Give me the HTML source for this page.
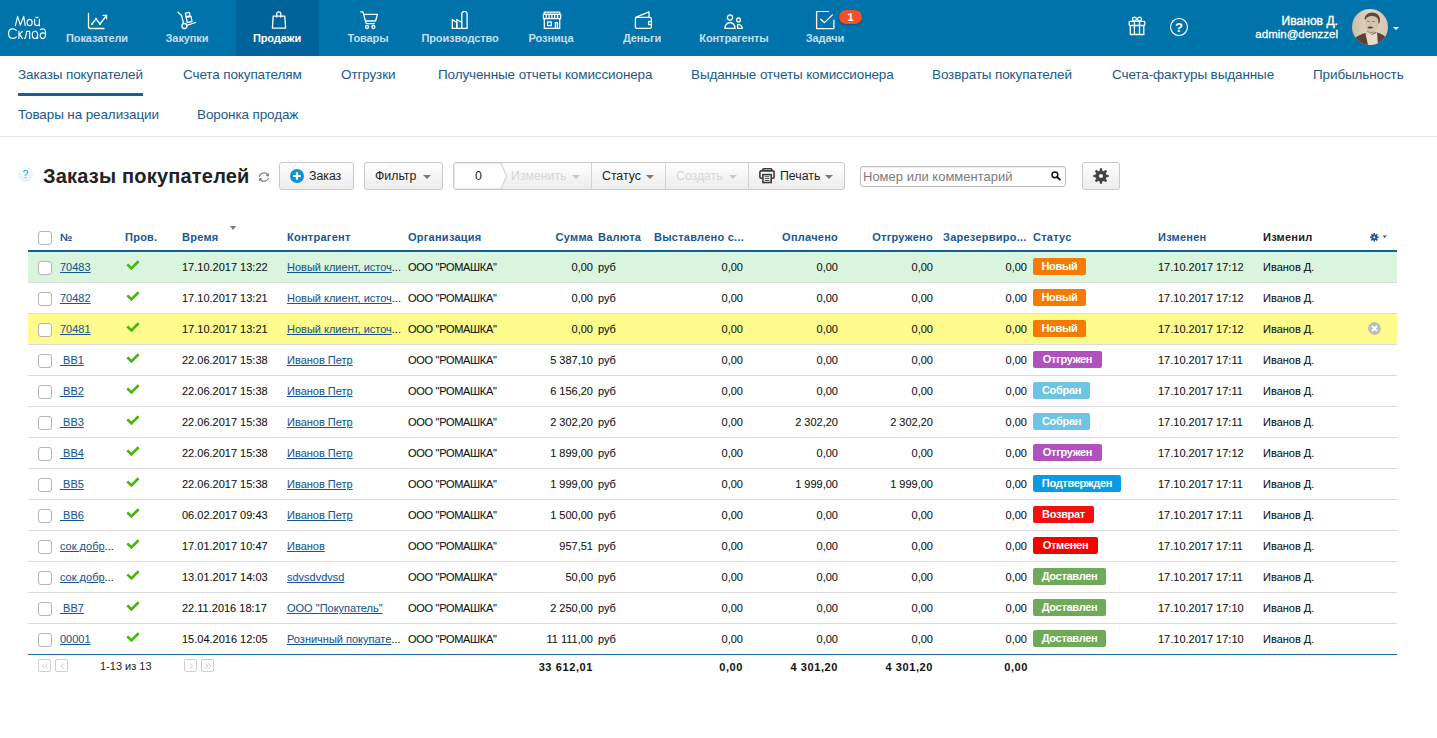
<!DOCTYPE html><html><head><meta charset="utf-8"><title>Заказы покупателей</title><style>
*{margin:0;padding:0;box-sizing:border-box}
html,body{width:1437px;height:738px;overflow:hidden;background:#fff;font-family:"Liberation Sans",sans-serif;position:relative}
.a{position:absolute;white-space:nowrap}
#top{position:absolute;left:0;top:0;width:1437px;height:56px;background:#0073ab}
.act{position:absolute;left:236px;top:0;width:83px;height:56px;background:#00649a}
.nl{position:absolute;top:32px;font:bold 11px/12px "Liberation Sans",sans-serif;color:#c8dfee;transform:translateX(-50%);letter-spacing:-0.1px}
.ni{position:absolute;top:10px}
.sub{position:absolute;font:13.5px/15px "Liberation Sans",sans-serif;color:#1a5a8c;letter-spacing:-0.12px}
.btn{position:absolute;top:162px;height:28px;border:1px solid #c9c9c9;border-radius:3px;background:linear-gradient(#fff,#ececec)}
.bt{position:absolute;font:12.3px/14px "Liberation Sans",sans-serif;color:#222}
.caret{position:absolute;width:0;height:0;border-left:4px solid transparent;border-right:4px solid transparent;border-top:4.5px solid #7a7a7a}
.th{position:absolute;top:231px;font:bold 11px/13px "Liberation Sans",sans-serif;color:#165895;letter-spacing:0.25px}
.row{position:absolute;left:28px;width:1369px;height:31px;border-bottom:1px solid #dcdcdc}
.cb{position:absolute;left:10px;top:9px;width:14px;height:14px;border:1px solid #b5b5b5;border-radius:3px;background:#fff}
.td{position:absolute;top:9px;font:11px/13px "Liberation Sans",sans-serif;color:#111;-webkit-text-stroke:0.08px currentColor}
.lnk{color:#1a5790;text-decoration:underline}
.r{text-align:right}
.badge{position:absolute;top:6px;height:17px;border-radius:2px;color:#fff;font:bold 11px/17px "Liberation Sans",sans-serif;text-align:center;letter-spacing:-0.3px}
.pg{position:absolute;top:659px;width:13px;height:13px;border:1px solid #cfcfcf;border-radius:2px;color:#bbb;font:9px/11px "Liberation Sans",sans-serif;text-align:center}
</style></head><body>
<div id="top"><div class="act"></div>
<svg class="a" style="left:0;top:0" width="56" height="56" viewBox="0 0 56 56"><g fill="none" stroke="#fff" stroke-width="1.15" stroke-linecap="round" stroke-linejoin="round"><path d="M15.4 25.6L17.6 16.4L20.3 25.2L23.7 16.4L25.2 25.6"/><ellipse cx="29.6" cy="22.5" rx="2.55" ry="3.2"/><path d="M34.6 19.3V23.2Q34.6 25.6 37 25.6Q39.4 25.6 39.4 23.2V19.3M39.4 23V25.7"/><path d="M36 17.2Q37 18 38 17.2"/><path d="M16.3 30.3Q14.8 28.8 12.6 28.8Q8.6 28.8 8.6 33.6Q8.6 38.4 12.6 38.4Q14.8 38.4 16.3 37"/><path d="M18.9 31.4V38.5M18.9 35L22.3 31.4M19.6 34.4L22.5 38.5"/><path d="M24.4 38.5Q26.3 37.5 26.5 31.4H29.7V38.5"/><path d="M37.6 34.8Q37.6 31.2 35 31.2Q32.3 31.2 32.3 34.8Q32.3 38.5 35 38.5Q37.6 38.5 37.6 34.8V38.5"/><path d="M40.4 29.6Q42 28.6 43.7 29Q45.7 29.6 45.6 34Q45.5 38.6 42.9 38.6Q40.2 38.6 40.2 35.6Q40.2 32.8 42.9 32.8Q45 32.8 45.5 34.2"/></g></svg>
<div class="ni" style="left:86px;top:11.5px"><svg width="24" height="22" viewBox="0 0 24 22"><g fill="none" stroke="#fff" stroke-width="1.3" stroke-linecap="round" stroke-linejoin="round"><path d="M2.5 1.5V14.5q0 2 2 2H18"/><path d="M6 12L10 6.8L14 12L20.5 3.5"/><path d="M17.2 3.4H20.6V6.8"/></g><g fill="#fff"><circle cx="6" cy="12" r="1"/><circle cx="10" cy="6.8" r="1"/><circle cx="14" cy="12" r="1"/></g></svg></div>
<div class="nl" style="left:97px;color:#c8dfee">Показатели</div>
<div class="ni" style="left:175px;top:11px"><svg width="24" height="22" viewBox="0 0 24 22"><g fill="none" stroke="#fff" stroke-width="1.3" stroke-linecap="round" stroke-linejoin="round"><path d="M3 1.3L6.6 4.6L8.4 12"/><circle cx="9.4" cy="15" r="2.5"/><path d="M11.9 14.3L20.5 11.5"/><path d="M10.4 2.2L14.4 1.4L15 4.8L11 5.6Z"/><path d="M11.2 6.3L16 5.4L17 10.6L12.2 11.5Z"/></g></svg></div>
<div class="nl" style="left:187px;color:#c8dfee">Закупки</div>
<div class="ni" style="left:266.5px;top:10.5px"><svg width="24" height="22" viewBox="0 0 24 22"><g fill="none" stroke="#fff" stroke-width="1.3" stroke-linecap="round" stroke-linejoin="round"><path d="M6.2 5.2H17.8L18.6 17.2H5.4Z"/><path d="M9.8 6V2.8a2 2 0 0 1 4 0V6"/></g></svg></div>
<div class="nl" style="left:277px;color:#ffffff">Продажи</div>
<div class="ni" style="left:358px;top:10.8px"><svg width="24" height="22" viewBox="0 0 24 22"><g fill="none" stroke="#fff" stroke-width="1.3" stroke-linecap="round" stroke-linejoin="round"><path d="M2.8 0.9H5L7.8 11.5q0.4 1.2 1.6 1.2H16.3"/><path d="M5.6 3.3H19.4L17.6 10H7.4"/><circle cx="9" cy="16" r="1.5"/><circle cx="15.4" cy="16" r="1.5"/></g></svg></div>
<div class="nl" style="left:368px;color:#c8dfee">Товары</div>
<div class="ni" style="left:448px;top:11px"><svg width="24" height="22" viewBox="0 0 24 22"><g fill="none" stroke="#fff" stroke-width="1.3" stroke-linecap="round" stroke-linejoin="round"><path d="M4.3 17.4V8.6L8.8 11.5V17.4"/><path d="M8.8 8.6L13.8 11.5"/><path d="M13.8 17.4V3.1a2.6 2.6 0 0 1 5.3 0V17.4H4.3"/><path d="M8.8 17.4V8.6"/></g></svg></div>
<div class="nl" style="left:460px;color:#c8dfee">Производство</div>
<div class="ni" style="left:540px;top:10.5px"><svg width="24" height="22" viewBox="0 0 24 22"><g fill="none" stroke="#fff" stroke-width="1.3" stroke-linecap="round" stroke-linejoin="round"><path d="M4.3 1.2H19.7V3.3H4.3Z"/><path d="M3.4 3.3H20.6V7.6H3.4Z"/><path d="M6.3 3.5V7.4 M9.1 3.5V7.4 M11.9 3.5V7.4 M14.7 3.5V7.4 M17.6 3.5V7.4"/><path d="M4.3 7.7V17.45H19.7V7.7"/><path d="M7.6 10.9H11.3V14.7H7.6Z"/><path d="M15.4 17.4V11.6H17.4V17.4"/></g></svg></div>
<div class="nl" style="left:551px;color:#c8dfee">Розница</div>
<div class="ni" style="left:631px;top:11px"><svg width="24" height="22" viewBox="0 0 24 22"><g fill="none" stroke="#fff" stroke-width="1.3" stroke-linecap="round" stroke-linejoin="round"><rect x="4.4" y="6.4" width="16" height="11" rx="1.6"/><path d="M4.6 6.3L18 0.8V6.3"/><path d="M20.3 10.4H17.6V13.6H20.3"/></g></svg></div>
<div class="nl" style="left:642px;color:#c8dfee">Деньги</div>
<div class="ni" style="left:721px;top:11.5px"><svg width="24" height="22" viewBox="0 0 24 22"><g fill="none" stroke="#fff" stroke-width="1.3" stroke-linecap="round" stroke-linejoin="round"><circle cx="9" cy="5.6" r="2.6"/><path d="M3.9 16.4a5.1 5.9 0 0 1 10.2 0Z"/><circle cx="17.5" cy="7.9" r="1.9"/><path d="M16.6 12.4a4.6 4 0 0 1 4.6 4H16.6Z"/></g></svg></div>
<div class="nl" style="left:734px;color:#c8dfee">Контрагенты</div>
<div class="ni" style="left:812px;top:11px"><svg width="24" height="22" viewBox="0 0 24 22"><g fill="none" stroke="#fff" stroke-width="1.3" stroke-linecap="round" stroke-linejoin="round"><path d="M16.3 0.4H4.6V17.6H21.9V9.2"/><path d="M8.6 8.3L12.4 11.6L20.4 3.9"/></g></svg></div>
<div class="nl" style="left:825px;color:#c8dfee">Задачи</div>
<div class="a" style="left:839px;top:10px;width:23px;height:14px;border-radius:7px;background:#f4512b;color:#fff;font:bold 11px/14px 'Liberation Sans',sans-serif;text-align:center;box-shadow:0 1px 2px rgba(0,0,0,.25)">1</div>
<svg class="a" style="left:1126px;top:15px" width="22" height="22" viewBox="0 0 22 22"><g fill="none" stroke="#fff" stroke-width="1.3"><rect x="3.2" y="6.4" width="15.6" height="4.1" rx="0.8"/><path d="M4.3 10.5V19.5H17.8V10.5"/><path d="M8.4 6.4V19.5M13.5 6.4V19.5"/><circle cx="8.4" cy="4.1" r="1.9"/><circle cx="13.5" cy="4.1" r="1.9"/></g></svg>
<svg class="a" style="left:1168px;top:16px" width="22" height="22" viewBox="0 0 22 22"><circle cx="11" cy="11" r="8.5" fill="none" stroke="#fff" stroke-width="1.2"/><text x="11" y="15.6" text-anchor="middle" font-family="Liberation Sans" font-weight="bold" font-size="13" fill="#fff">?</text></svg>
<div class="a" style="right:99px;top:15px;font:12px/13px 'Liberation Sans',sans-serif;color:#fff;text-align:right;-webkit-text-stroke:0.4px #fff;letter-spacing:0.05px">Иванов Д.</div>
<div class="a" style="right:99px;top:28px;font:11.5px/13px 'Liberation Sans',sans-serif;color:#fff;text-align:right;-webkit-text-stroke:0.3px #fff">admin@denzzel</div>
<svg class="a" style="left:1352px;top:9px" width="36" height="36" viewBox="0 0 36 36"><defs><clipPath id="cp"><circle cx="18" cy="18" r="18"/></clipPath><linearGradient id="bgav" x1="0" y1="0" x2="1" y2="0"><stop offset="0" stop-color="#cdbca6"/><stop offset="0.5" stop-color="#e2d6c4"/><stop offset="1" stop-color="#d6c6b0"/></linearGradient></defs><g clip-path="url(#cp)"><rect width="36" height="36" fill="url(#bgav)"/><path d="M0 36V31Q6 26 13 24L17 27L24 23Q31 25 36 30V36Z" fill="#5e4036"/><path d="M13.5 24.5L16 36H26L25 23Q22 26 19 26Q16 26 13.5 24.5Z" fill="#e6dccd"/><path d="M13 11Q13 20 15.5 23Q18 25.5 21 24.5Q26 22 27 13Q27 6 20.5 5.5Q13 5.5 13 11Z" fill="#d3c2ac"/><path d="M12.5 10Q13 4 20 3.5Q27 3.5 28 10Q28 14 26.5 15L26 10Q24 6.5 19 7Q14 7.5 13.5 11Z" fill="#5f463c"/><path d="M15.5 18.2Q18 16.6 21.5 18.6Q19.5 19.8 18.5 19.2Q17 20 15.5 18.2Z" fill="#4e3a32"/><path d="M15 12.5H18M20 12.5H23" stroke="#8a7262" stroke-width="0.8"/><path d="M15 22Q18 25 22 23" stroke="#9b8573" stroke-width="1" fill="none"/></g></svg>
<div class="a" style="left:1393px;top:27px;width:0;height:0;border-left:3px solid transparent;border-right:3px solid transparent;border-top:3px solid #fff"></div>
</div>
<div class="sub" style="left:18px;top:67px">Заказы покупателей</div>
<div class="sub" style="left:183px;top:67px">Счета покупателям</div>
<div class="sub" style="left:341px;top:67px">Отгрузки</div>
<div class="sub" style="left:438px;top:67px">Полученные отчеты комиссионера</div>
<div class="sub" style="left:691px;top:67px">Выданные отчеты комиссионера</div>
<div class="sub" style="left:932px;top:67px">Возвраты покупателей</div>
<div class="sub" style="left:1112px;top:67px">Счета-фактуры выданные</div>
<div class="sub" style="left:1313px;top:67px">Прибыльность</div>
<div class="sub" style="left:18px;top:107px">Товары на реализации</div>
<div class="sub" style="left:197px;top:107px">Воронка продаж</div>
<div class="a" style="left:18px;top:93px;width:125px;height:3px;background:#1560a0"></div>
<div class="a" style="left:0;top:136px;width:1437px;height:1px;background:#e8e8e8"></div>
<div class="a" style="left:18px;top:166.5px;width:15px;height:15px;border-radius:50%;background:radial-gradient(circle at 50% 30%,#fbfdff,#deeef8);color:#2a9cd0;font:10.5px/14px 'Liberation Sans',sans-serif;text-align:center">?</div>
<div class="a" style="left:43px;top:164.5px;font:bold 20px/23px 'Liberation Sans',sans-serif;color:#222;letter-spacing:0.2px">Заказы покупателей</div>
<svg class="a" style="left:258px;top:171px" width="12" height="12" viewBox="0 0 12 12"><g fill="none" stroke="#777" stroke-width="1.1"><path d="M1.4 6A4.7 4.5 0 0 1 9.8 3.6"/><path d="M10.6 6.8A4.7 4.5 0 0 1 2.4 8.6"/></g><path d="M10.9 1.8V5.3H7.5Z" fill="#777"/><path d="M1.1 10.6V7.2H4.5Z" fill="#777"/></svg>
<div class="btn" style="left:279px;width:75px"></div>
<svg class="a" style="left:290px;top:169px" width="14" height="14" viewBox="0 0 14 14"><circle cx="7" cy="7" r="7" fill="#0c92da"/><path d="M7 3.3V10.7M3.3 7H10.7" stroke="#fff" stroke-width="2.2"/></svg>
<div class="bt" style="left:309px;top:169px">Заказ</div>
<div class="btn" style="left:364px;width:79px"></div>
<div class="bt" style="left:375px;top:169px">Фильтр</div>
<div class="caret" style="left:423px;top:175px"></div>
<div class="btn" style="left:453px;width:392px"></div>
<svg class="a" style="left:454px;top:163px" width="54" height="26" viewBox="0 0 54 26"><path d="M0 0H47L52.5 13L47 26H0Z" fill="#fff" stroke="#cfcfcf" stroke-width="1"/></svg>
<div class="bt" style="left:475px;top:169px">0</div>
<div class="bt" style="left:511px;top:169px;color:#d6d6d6">Изменить</div>
<div class="caret" style="left:572px;top:175px;border-top-color:#c8c8c8"></div>
<div class="a" style="left:591px;top:163px;width:1px;height:26px;background:#d3d3d3"></div>
<div class="bt" style="left:602px;top:169px">Статус</div>
<div class="caret" style="left:646px;top:175px"></div>
<div class="a" style="left:665px;top:163px;width:1px;height:26px;background:#d3d3d3"></div>
<div class="bt" style="left:676px;top:169px;color:#d6d6d6">Создать</div>
<div class="caret" style="left:729px;top:175px;border-top-color:#c8c8c8"></div>
<div class="a" style="left:748px;top:163px;width:1px;height:26px;background:#d3d3d3"></div>
<svg class="a" style="left:759px;top:168px" width="17" height="16" viewBox="0 0 17 16"><g fill="none" stroke="#3a3a3a" stroke-width="1.6"><path d="M3.8 2.6V1.6Q3.8 0.8 4.6 0.8H12Q12.8 0.8 12.8 1.6V2.6"/><path d="M3.3 10.2H2Q0.9 10.2 0.9 9.1V4.2Q0.9 2.9 2.2 2.9H13.8Q15.1 2.9 15.1 4.2V9.1Q15.1 10.2 14 10.2H12.8"/><rect x="3.9" y="6.6" width="8.3" height="7.9" fill="#fff"/><path d="M5.7 8.7H10.4M5.7 10.6H10.4M5.7 12.5H10.4" stroke-width="0.9"/></g></svg>
<div class="bt" style="left:780px;top:169px">Печать</div>
<div class="caret" style="left:825px;top:175px"></div>
<div class="a" style="left:860px;top:166px;width:206px;height:21px;border:1px solid #bdbdbd;border-radius:3px;background:#fff;box-shadow:inset 0 1px 1px rgba(0,0,0,.06)"></div>
<div class="a" style="left:863px;top:169px;font:13px/15px 'Liberation Sans',sans-serif;color:#7b7b7b">Номер или комментарий</div>
<svg class="a" style="left:1051px;top:171px" width="11" height="10" viewBox="0 0 11 10"><circle cx="3.9" cy="3.8" r="2.9" fill="none" stroke="#111" stroke-width="1.5"/><path d="M6.1 6L8.9 8.6" stroke="#111" stroke-width="1.9" stroke-linecap="round"/></svg>
<div class="btn" style="left:1082px;width:38px"></div>
<svg class="a" style="left:1093px;top:168px" width="16" height="16" viewBox="0 0 16 16"><g fill="#454545"><circle cx="8" cy="8" r="5.5"/><path d="M7 0.3H9L9.6 4H6.4Z"/><path d="M7 0.3H9L9.6 4H6.4Z" transform="rotate(45 8 8)"/><path d="M7 0.3H9L9.6 4H6.4Z" transform="rotate(90 8 8)"/><path d="M7 0.3H9L9.6 4H6.4Z" transform="rotate(135 8 8)"/><path d="M7 0.3H9L9.6 4H6.4Z" transform="rotate(180 8 8)"/><path d="M7 0.3H9L9.6 4H6.4Z" transform="rotate(225 8 8)"/><path d="M7 0.3H9L9.6 4H6.4Z" transform="rotate(270 8 8)"/><path d="M7 0.3H9L9.6 4H6.4Z" transform="rotate(315 8 8)"/></g><circle cx="8" cy="8" r="2.1" fill="#f0f0f0"/></svg>
<div class="cb" style="left:38px;top:231px"></div>
<div class="th" style="left:60px;color:#165895">№</div>
<div class="th" style="left:125px;color:#165895">Пров.</div>
<div class="th" style="left:182px;color:#165895">Время</div>
<div class="th" style="left:287px;color:#165895">Контрагент</div>
<div class="th" style="left:408px;color:#165895">Организация</div>
<div class="th" style="right:844px;color:#165895">Сумма</div>
<div class="th" style="left:598px;color:#165895">Валюта</div>
<div class="th" style="left:654px;color:#165895">Выставлено с...</div>
<div class="th" style="right:599px;color:#165895">Оплачено</div>
<div class="th" style="right:504px;color:#165895">Отгружено</div>
<div class="th" style="left:943px;color:#165895">Зарезервиро...</div>
<div class="th" style="left:1033px;color:#165895">Статус</div>
<div class="th" style="left:1158px;color:#165895">Изменен</div>
<div class="th" style="left:1263px;color:#222">Изменил</div>
<div class="a" style="left:230px;top:226px;width:0;height:0;border-left:3px solid transparent;border-right:3px solid transparent;border-top:4px solid #777"></div>
<svg class="a" style="left:1370px;top:233px" width="18" height="9" viewBox="0 0 18 9"><g fill="#1a5b92"><circle cx="4.3" cy="4.3" r="2.8"/><rect x="3.5" y="0" width="1.6" height="8.6"/><rect x="0" y="3.5" width="8.6" height="1.6"/><rect x="3.5" y="0" width="1.6" height="8.6" transform="rotate(45 4.3 4.3)"/><rect x="3.5" y="0" width="1.6" height="8.6" transform="rotate(-45 4.3 4.3)"/><path d="M12.5 2.5H17L14.75 5Z"/></g><circle cx="4.3" cy="4.3" r="1.1" fill="#fff"/></svg>
<div class="a" style="left:28px;top:250px;width:1369px;height:2px;background:#125e9c"></div>
<div class="row" style="top:252px;background:#d9f5de">
<div class="cb"></div>
<div class="td lnk" style="left:32px">70483</div>
<svg class="a" style="left:98px;top:8px" width="14" height="11" viewBox="0 0 14 11"><path d="M1.3 4.4L5.4 8.4L12.6 1.3" fill="none" stroke="#4ab60f" stroke-width="2.7"/></svg>
<div class="td" style="left:154px">17.10.2017 13:22</div>
<div class="td" style="left:259px"><span class="lnk">Новый клиент, источ</span>...</div>
<div class="td" style="left:380px;letter-spacing:-0.3px">ООО "РОМАШКА"</div>
<div class="td r" style="right:804px">0,00</div>
<div class="td" style="left:570px">руб</div>
<div class="td r" style="right:654px">0,00</div>
<div class="td r" style="right:559px">0,00</div>
<div class="td r" style="right:464px">0,00</div>
<div class="td r" style="right:370px">0,00</div>
<div class="badge" style="left:1005px;width:53px;background:#f57b00">Новый</div>
<div class="td" style="left:1130px">17.10.2017 17:12</div>
<div class="td" style="left:1235px">Иванов Д.</div>
</div>
<div class="row" style="top:283px;background:#ffffff">
<div class="cb"></div>
<div class="td lnk" style="left:32px">70482</div>
<svg class="a" style="left:98px;top:8px" width="14" height="11" viewBox="0 0 14 11"><path d="M1.3 4.4L5.4 8.4L12.6 1.3" fill="none" stroke="#4ab60f" stroke-width="2.7"/></svg>
<div class="td" style="left:154px">17.10.2017 13:21</div>
<div class="td" style="left:259px"><span class="lnk">Новый клиент, источ</span>...</div>
<div class="td" style="left:380px;letter-spacing:-0.3px">ООО "РОМАШКА"</div>
<div class="td r" style="right:804px">0,00</div>
<div class="td" style="left:570px">руб</div>
<div class="td r" style="right:654px">0,00</div>
<div class="td r" style="right:559px">0,00</div>
<div class="td r" style="right:464px">0,00</div>
<div class="td r" style="right:370px">0,00</div>
<div class="badge" style="left:1005px;width:53px;background:#f57b00">Новый</div>
<div class="td" style="left:1130px">17.10.2017 17:12</div>
<div class="td" style="left:1235px">Иванов Д.</div>
</div>
<div class="row" style="top:314px;background:#fdfc8c">
<div class="cb"></div>
<div class="td lnk" style="left:32px">70481</div>
<svg class="a" style="left:98px;top:8px" width="14" height="11" viewBox="0 0 14 11"><path d="M1.3 4.4L5.4 8.4L12.6 1.3" fill="none" stroke="#4ab60f" stroke-width="2.7"/></svg>
<div class="td" style="left:154px">17.10.2017 13:21</div>
<div class="td" style="left:259px"><span class="lnk">Новый клиент, источ</span>...</div>
<div class="td" style="left:380px;letter-spacing:-0.3px">ООО "РОМАШКА"</div>
<div class="td r" style="right:804px">0,00</div>
<div class="td" style="left:570px">руб</div>
<div class="td r" style="right:654px">0,00</div>
<div class="td r" style="right:559px">0,00</div>
<div class="td r" style="right:464px">0,00</div>
<div class="td r" style="right:370px">0,00</div>
<div class="badge" style="left:1005px;width:53px;background:#f57b00">Новый</div>
<div class="td" style="left:1130px">17.10.2017 17:12</div>
<div class="td" style="left:1235px">Иванов Д.</div>
<svg class="a" style="left:1340px;top:8px" width="14" height="14" viewBox="0 0 14 14"><circle cx="6.5" cy="6.5" r="6.4" fill="#bdbdbd"/><path d="M4 4L9 9M9 4L4 9" stroke="#fff" stroke-width="1.8"/></svg>
</div>
<div class="row" style="top:345px;background:#ffffff">
<div class="cb"></div>
<div class="td lnk" style="left:32px">&nbsp;BB1</div>
<svg class="a" style="left:98px;top:8px" width="14" height="11" viewBox="0 0 14 11"><path d="M1.3 4.4L5.4 8.4L12.6 1.3" fill="none" stroke="#4ab60f" stroke-width="2.7"/></svg>
<div class="td" style="left:154px">22.06.2017 15:38</div>
<div class="td" style="left:259px"><span class="lnk">Иванов Петр</span></div>
<div class="td" style="left:380px;letter-spacing:-0.3px">ООО "РОМАШКА"</div>
<div class="td r" style="right:804px">5 387,10</div>
<div class="td" style="left:570px">руб</div>
<div class="td r" style="right:654px">0,00</div>
<div class="td r" style="right:559px">0,00</div>
<div class="td r" style="right:464px">0,00</div>
<div class="td r" style="right:370px">0,00</div>
<div class="badge" style="left:1005px;width:69px;background:#b151be">Отгружен</div>
<div class="td" style="left:1130px">17.10.2017 17:11</div>
<div class="td" style="left:1235px">Иванов Д.</div>
</div>
<div class="row" style="top:376px;background:#ffffff">
<div class="cb"></div>
<div class="td lnk" style="left:32px">&nbsp;BB2</div>
<svg class="a" style="left:98px;top:8px" width="14" height="11" viewBox="0 0 14 11"><path d="M1.3 4.4L5.4 8.4L12.6 1.3" fill="none" stroke="#4ab60f" stroke-width="2.7"/></svg>
<div class="td" style="left:154px">22.06.2017 15:38</div>
<div class="td" style="left:259px"><span class="lnk">Иванов Петр</span></div>
<div class="td" style="left:380px;letter-spacing:-0.3px">ООО "РОМАШКА"</div>
<div class="td r" style="right:804px">6 156,20</div>
<div class="td" style="left:570px">руб</div>
<div class="td r" style="right:654px">0,00</div>
<div class="td r" style="right:559px">0,00</div>
<div class="td r" style="right:464px">0,00</div>
<div class="td r" style="right:370px">0,00</div>
<div class="badge" style="left:1005px;width:57px;background:#6ec4e2">Собран</div>
<div class="td" style="left:1130px">17.10.2017 17:11</div>
<div class="td" style="left:1235px">Иванов Д.</div>
</div>
<div class="row" style="top:407px;background:#ffffff">
<div class="cb"></div>
<div class="td lnk" style="left:32px">&nbsp;BB3</div>
<svg class="a" style="left:98px;top:8px" width="14" height="11" viewBox="0 0 14 11"><path d="M1.3 4.4L5.4 8.4L12.6 1.3" fill="none" stroke="#4ab60f" stroke-width="2.7"/></svg>
<div class="td" style="left:154px">22.06.2017 15:38</div>
<div class="td" style="left:259px"><span class="lnk">Иванов Петр</span></div>
<div class="td" style="left:380px;letter-spacing:-0.3px">ООО "РОМАШКА"</div>
<div class="td r" style="right:804px">2 302,20</div>
<div class="td" style="left:570px">руб</div>
<div class="td r" style="right:654px">0,00</div>
<div class="td r" style="right:559px">2 302,20</div>
<div class="td r" style="right:464px">2 302,20</div>
<div class="td r" style="right:370px">0,00</div>
<div class="badge" style="left:1005px;width:57px;background:#6ec4e2">Собран</div>
<div class="td" style="left:1130px">17.10.2017 17:11</div>
<div class="td" style="left:1235px">Иванов Д.</div>
</div>
<div class="row" style="top:438px;background:#ffffff">
<div class="cb"></div>
<div class="td lnk" style="left:32px">&nbsp;BB4</div>
<svg class="a" style="left:98px;top:8px" width="14" height="11" viewBox="0 0 14 11"><path d="M1.3 4.4L5.4 8.4L12.6 1.3" fill="none" stroke="#4ab60f" stroke-width="2.7"/></svg>
<div class="td" style="left:154px">22.06.2017 15:38</div>
<div class="td" style="left:259px"><span class="lnk">Иванов Петр</span></div>
<div class="td" style="left:380px;letter-spacing:-0.3px">ООО "РОМАШКА"</div>
<div class="td r" style="right:804px">1 899,00</div>
<div class="td" style="left:570px">руб</div>
<div class="td r" style="right:654px">0,00</div>
<div class="td r" style="right:559px">0,00</div>
<div class="td r" style="right:464px">0,00</div>
<div class="td r" style="right:370px">0,00</div>
<div class="badge" style="left:1005px;width:69px;background:#b151be">Отгружен</div>
<div class="td" style="left:1130px">17.10.2017 17:12</div>
<div class="td" style="left:1235px">Иванов Д.</div>
</div>
<div class="row" style="top:469px;background:#ffffff">
<div class="cb"></div>
<div class="td lnk" style="left:32px">&nbsp;BB5</div>
<svg class="a" style="left:98px;top:8px" width="14" height="11" viewBox="0 0 14 11"><path d="M1.3 4.4L5.4 8.4L12.6 1.3" fill="none" stroke="#4ab60f" stroke-width="2.7"/></svg>
<div class="td" style="left:154px">22.06.2017 15:38</div>
<div class="td" style="left:259px"><span class="lnk">Иванов Петр</span></div>
<div class="td" style="left:380px;letter-spacing:-0.3px">ООО "РОМАШКА"</div>
<div class="td r" style="right:804px">1 999,00</div>
<div class="td" style="left:570px">руб</div>
<div class="td r" style="right:654px">0,00</div>
<div class="td r" style="right:559px">1 999,00</div>
<div class="td r" style="right:464px">1 999,00</div>
<div class="td r" style="right:370px">0,00</div>
<div class="badge" style="left:1005px;width:88px;background:#0a9be3">Подтвержден</div>
<div class="td" style="left:1130px">17.10.2017 17:11</div>
<div class="td" style="left:1235px">Иванов Д.</div>
</div>
<div class="row" style="top:500px;background:#ffffff">
<div class="cb"></div>
<div class="td lnk" style="left:32px">&nbsp;BB6</div>
<svg class="a" style="left:98px;top:8px" width="14" height="11" viewBox="0 0 14 11"><path d="M1.3 4.4L5.4 8.4L12.6 1.3" fill="none" stroke="#4ab60f" stroke-width="2.7"/></svg>
<div class="td" style="left:154px">06.02.2017 09:43</div>
<div class="td" style="left:259px"><span class="lnk">Иванов Петр</span></div>
<div class="td" style="left:380px;letter-spacing:-0.3px">ООО "РОМАШКА"</div>
<div class="td r" style="right:804px">1 500,00</div>
<div class="td" style="left:570px">руб</div>
<div class="td r" style="right:654px">0,00</div>
<div class="td r" style="right:559px">0,00</div>
<div class="td r" style="right:464px">0,00</div>
<div class="td r" style="right:370px">0,00</div>
<div class="badge" style="left:1005px;width:61px;background:#f01010">Возврат</div>
<div class="td" style="left:1130px">17.10.2017 17:11</div>
<div class="td" style="left:1235px">Иванов Д.</div>
</div>
<div class="row" style="top:531px;background:#ffffff">
<div class="cb"></div>
<div class="td" style="left:32px"><span class="lnk">сок добр</span>...</div>
<svg class="a" style="left:98px;top:8px" width="14" height="11" viewBox="0 0 14 11"><path d="M1.3 4.4L5.4 8.4L12.6 1.3" fill="none" stroke="#4ab60f" stroke-width="2.7"/></svg>
<div class="td" style="left:154px">17.01.2017 10:47</div>
<div class="td" style="left:259px"><span class="lnk">Иванов</span></div>
<div class="td" style="left:380px;letter-spacing:-0.3px">ООО "РОМАШКА"</div>
<div class="td r" style="right:804px">957,51</div>
<div class="td" style="left:570px">руб</div>
<div class="td r" style="right:654px">0,00</div>
<div class="td r" style="right:559px">0,00</div>
<div class="td r" style="right:464px">0,00</div>
<div class="td r" style="right:370px">0,00</div>
<div class="badge" style="left:1005px;width:65px;background:#f80000">Отменен</div>
<div class="td" style="left:1130px">17.10.2017 17:11</div>
<div class="td" style="left:1235px">Иванов Д.</div>
</div>
<div class="row" style="top:562px;background:#ffffff">
<div class="cb"></div>
<div class="td" style="left:32px"><span class="lnk">сок добр</span>...</div>
<svg class="a" style="left:98px;top:8px" width="14" height="11" viewBox="0 0 14 11"><path d="M1.3 4.4L5.4 8.4L12.6 1.3" fill="none" stroke="#4ab60f" stroke-width="2.7"/></svg>
<div class="td" style="left:154px">13.01.2017 14:03</div>
<div class="td" style="left:259px"><span class="lnk">sdvsdvdvsd</span></div>
<div class="td" style="left:380px;letter-spacing:-0.3px">ООО "РОМАШКА"</div>
<div class="td r" style="right:804px">50,00</div>
<div class="td" style="left:570px">руб</div>
<div class="td r" style="right:654px">0,00</div>
<div class="td r" style="right:559px">0,00</div>
<div class="td r" style="right:464px">0,00</div>
<div class="td r" style="right:370px">0,00</div>
<div class="badge" style="left:1005px;width:73px;background:#6faa5a">Доставлен</div>
<div class="td" style="left:1130px">17.10.2017 17:11</div>
<div class="td" style="left:1235px">Иванов Д.</div>
</div>
<div class="row" style="top:593px;background:#ffffff">
<div class="cb"></div>
<div class="td lnk" style="left:32px">&nbsp;BB7</div>
<svg class="a" style="left:98px;top:8px" width="14" height="11" viewBox="0 0 14 11"><path d="M1.3 4.4L5.4 8.4L12.6 1.3" fill="none" stroke="#4ab60f" stroke-width="2.7"/></svg>
<div class="td" style="left:154px">22.11.2016 18:17</div>
<div class="td" style="left:259px"><span class="lnk">ООО "Покупатель"</span></div>
<div class="td" style="left:380px;letter-spacing:-0.3px">ООО "РОМАШКА"</div>
<div class="td r" style="right:804px">2 250,00</div>
<div class="td" style="left:570px">руб</div>
<div class="td r" style="right:654px">0,00</div>
<div class="td r" style="right:559px">0,00</div>
<div class="td r" style="right:464px">0,00</div>
<div class="td r" style="right:370px">0,00</div>
<div class="badge" style="left:1005px;width:73px;background:#6faa5a">Доставлен</div>
<div class="td" style="left:1130px">17.10.2017 17:10</div>
<div class="td" style="left:1235px">Иванов Д.</div>
</div>
<div class="row" style="top:624px;background:#ffffff">
<div class="cb"></div>
<div class="td lnk" style="left:32px">00001</div>
<svg class="a" style="left:98px;top:8px" width="14" height="11" viewBox="0 0 14 11"><path d="M1.3 4.4L5.4 8.4L12.6 1.3" fill="none" stroke="#4ab60f" stroke-width="2.7"/></svg>
<div class="td" style="left:154px">15.04.2016 12:05</div>
<div class="td" style="left:259px"><span class="lnk">Розничный покупате</span>...</div>
<div class="td" style="left:380px;letter-spacing:-0.3px">ООО "РОМАШКА"</div>
<div class="td r" style="right:804px">11 111,00</div>
<div class="td" style="left:570px">руб</div>
<div class="td r" style="right:654px">0,00</div>
<div class="td r" style="right:559px">0,00</div>
<div class="td r" style="right:464px">0,00</div>
<div class="td r" style="right:370px">0,00</div>
<div class="badge" style="left:1005px;width:73px;background:#6faa5a">Доставлен</div>
<div class="td" style="left:1130px">17.10.2017 17:10</div>
<div class="td" style="left:1235px">Иванов Д.</div>
</div>
<div class="a" style="left:28px;top:654px;width:1369px;height:1px;background:#1c6ea6"></div>
<div class="pg" style="left:38px"><svg width="11" height="11" viewBox="0 0 11 11" style="position:absolute;left:0;top:0"><path d="M6 3.5L3.5 6L6 8.5M8.8 3.5L6.3 6L8.8 8.5" fill="none" stroke="#c4c4c4" stroke-width="0.9"/></svg></div>
<div class="pg" style="left:55px"><svg width="11" height="11" viewBox="0 0 11 11" style="position:absolute;left:0;top:0"><path d="M7.5 3.5L5 6L7.5 8.5" fill="none" stroke="#c4c4c4" stroke-width="0.9"/></svg></div>
<div class="pg" style="left:184px"><svg width="11" height="11" viewBox="0 0 11 11" style="position:absolute;left:0;top:0"><path d="M5 3.5L7.5 6L5 8.5" fill="none" stroke="#c4c4c4" stroke-width="0.9"/></svg></div>
<div class="pg" style="left:201px"><svg width="11" height="11" viewBox="0 0 11 11" style="position:absolute;left:0;top:0"><path d="M3.6 3.5L6.1 6L3.6 8.5M6.4 3.5L8.9 6L6.4 8.5" fill="none" stroke="#c4c4c4" stroke-width="0.9"/></svg></div>
<div class="a" style="left:100px;top:660px;font:11px/13px 'Liberation Sans',sans-serif;color:#222">1-13 из 13</div>
<div class="a" style="right:844px;top:661px;font:bold 11px/13px 'Liberation Sans',sans-serif;color:#111;text-align:right;letter-spacing:0.6px">33 612,01</div>
<div class="a" style="right:694px;top:661px;font:bold 11px/13px 'Liberation Sans',sans-serif;color:#111;text-align:right;letter-spacing:0.6px">0,00</div>
<div class="a" style="right:599px;top:661px;font:bold 11px/13px 'Liberation Sans',sans-serif;color:#111;text-align:right;letter-spacing:0.6px">4 301,20</div>
<div class="a" style="right:504px;top:661px;font:bold 11px/13px 'Liberation Sans',sans-serif;color:#111;text-align:right;letter-spacing:0.6px">4 301,20</div>
<div class="a" style="right:409px;top:661px;font:bold 11px/13px 'Liberation Sans',sans-serif;color:#111;text-align:right;letter-spacing:0.6px">0,00</div>
</body></html>
